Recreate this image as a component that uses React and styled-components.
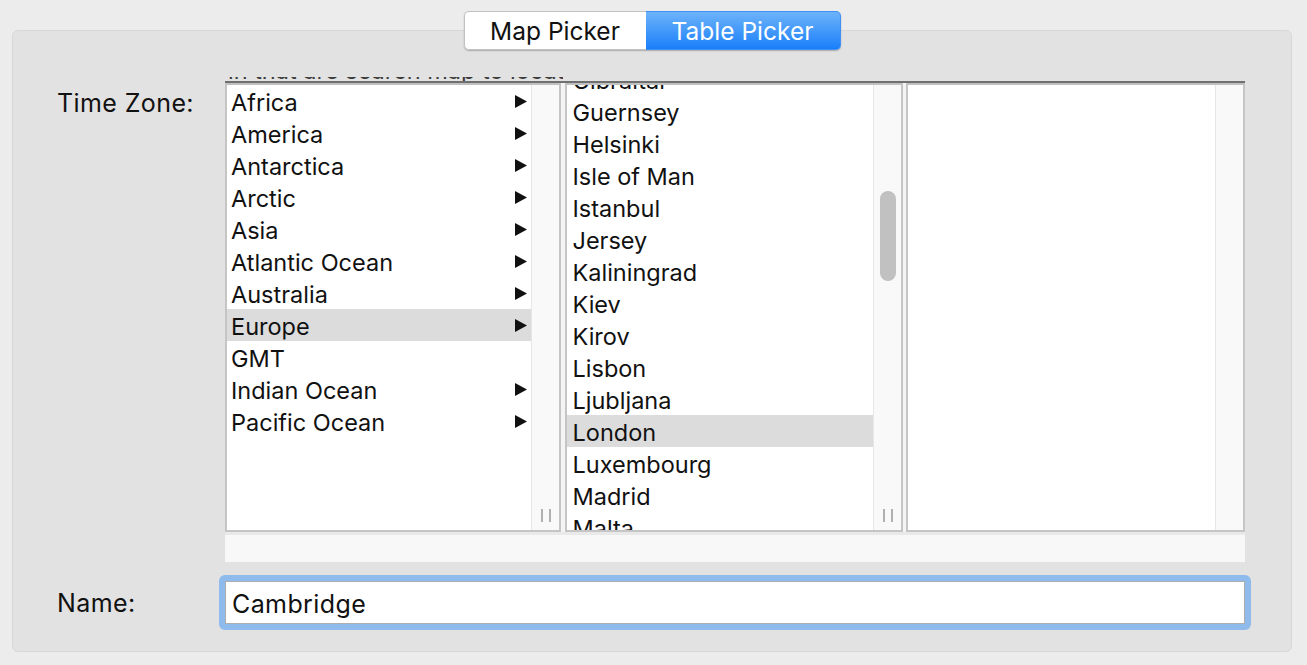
import React from "react";
import styled, { createGlobalStyle } from "styled-components";

const GlobalStyle = createGlobalStyle`
  body {
    margin: 0;
    background: #ececec;
    font-family: "Inter", "Liberation Sans", Arial, sans-serif;
    color: #111;
  }
`;

const regions = [
  { name: "Africa", more: true },
  { name: "America", more: true },
  { name: "Antarctica", more: true },
  { name: "Arctic", more: true },
  { name: "Asia", more: true },
  { name: "Atlantic Ocean", more: true },
  { name: "Australia", more: true },
  { name: "Europe", more: true, selected: true },
  { name: "GMT" },
  { name: "Indian Ocean", more: true },
  { name: "Pacific Ocean", more: true },
];

const cities = [
  "Gibraltar", "Guernsey", "Helsinki", "Isle of Man", "Istanbul", "Jersey",
  "Kaliningrad", "Kiev", "Kirov", "Lisbon", "Ljubljana", "London",
  "Luxembourg", "Madrid", "Malta",
];

const Page = styled.div`
  width: 1307px;
  height: 665px;
  box-sizing: border-box;
  padding: 11px 15px 0 12px;
  display: flex;
  flex-direction: column;
  align-items: center;
`;

const Segmented = styled.div`
  display: flex;
  position: relative;
  z-index: 1;
  border-radius: 5px;
  box-shadow: 0 1px 1.5px rgba(0, 0, 0, 0.25);
`;

const Segment = styled.div`
  width: ${(p) => p.$width}px;
  height: 39px;
  box-sizing: border-box;
  display: flex;
  align-items: center;
  justify-content: center;
  padding-top: 1px;
  font-size: 24.5px;
  color: ${(p) => (p.$active ? "#fff" : "#111")};
  background: ${(p) => (p.$active ? "linear-gradient(#6db3fa, #1a7ffa)" : "#fff")};
  border: 1px solid ${(p) => (p.$active ? "#3f8ff6" : "#c2c2c2")};
  border-radius: ${(p) => (p.$active ? "0 5px 5px 0" : "5px 0 0 5px")};
  ${(p) => (p.$active ? "border-left: none;" : "border-right: none;")}
`;

const Panel = styled.div`
  width: 1280px;
  height: 622px;
  margin-top: -20px;
  box-sizing: border-box;
  background: #e2e2e2;
  border: 1px solid #d7d7d7;
  border-radius: 6px;
  padding: 46px 0 0 44px;
  display: grid;
  grid-template-columns: 168px 1020px;
  grid-template-rows: auto auto;
  align-content: start;
  row-gap: 13px;
`;

const Label = styled.div`
  font-size: 25px;
  letter-spacing: 0.4px;
  line-height: 32px;
  padding-top: ${(p) => p.$top || 0}px;
  align-self: ${(p) => (p.$center ? "center" : "start")};
`;

const Browser = styled.div`
  display: flex;
  flex-direction: column;
`;

const Ghost = styled.div`
  height: 4px;
  width: 335px;
  overflow: hidden;
  display: flex;
  align-items: flex-end;
  padding-left: 3px;
  font-size: 23.5px;
  line-height: 20px;
  color: #3a3a3a;
  white-space: nowrap;
`;

const TopRule = styled.div`
  height: 2px;
  background: #707070;
`;

const Columns = styled.div`
  display: flex;
  justify-content: space-between;
  background: #f4f4f4;
  height: 449px;
`;

const Column = styled.div`
  width: ${(p) => p.$width}px;
  box-sizing: border-box;
  border: 2px solid #c5c5c5;
  border-top-color: #c0c0c0;
  background: #fff;
  display: flex;
`;

const List = styled.div`
  flex: 1;
  overflow: hidden;
`;

const ListInner = styled.div`
  margin-top: ${(p) => -(p.$scroll || 0)}px;
`;

const Row = styled.div`
  height: 32px;
  box-sizing: border-box;
  display: flex;
  align-items: center;
  justify-content: space-between;
  padding: 3px 4px 0 ${(p) => p.$pad}px;
  font-size: 23.5px;
  line-height: 29px;
  white-space: nowrap;
  background: ${(p) => (p.$selected ? "#dcdcdc" : "transparent")};

  svg {
    margin-top: -3px;
  }
`;

const Track = styled.div`
  width: 28px;
  flex-shrink: 0;
  box-sizing: border-box;
  border-left: 1px solid #e7e7e7;
  background: #f9f9f9;
  display: flex;
  flex-direction: column;
  justify-content: space-between;
  align-items: center;
`;

const Thumb = styled.div`
  width: 16px;
  height: 90px;
  margin-top: 106px;
  margin-left: 1px;
  border-radius: 8px;
  background: #c1c1c1;
`;

const Grip = styled.div`
  display: flex;
  gap: 6px;
  margin-top: auto;
  margin-bottom: 8px;
  margin-left: 1px;
`;

const GripLine = styled.div`
  width: 2px;
  height: 13px;
  background: #b0b0b0;
`;

const Spacer = styled.div`
  height: 3px;
  background: #e9e9e9;
`;

const HScroller = styled.div`
  height: 27px;
  background: #f8f8f8;
`;

const FocusRing = styled.div`
  margin-left: -6px;
  width: 1032px;
  box-sizing: border-box;
  padding: 6px;
  background: #8fbbec;
  border-radius: 6px;
`;

const Field = styled.div`
  height: 43px;
  box-sizing: border-box;
  background: #fff;
  border: 1px solid #aeaeae;
  padding: 3px 0 0 6px;
  display: flex;
  align-items: center;
  font-size: 25px;
  letter-spacing: 0.4px;
`;

const Arrow = () => (
  <svg width="12" height="13" viewBox="0 0 12 13">
    <polygon points="0,0 12,6.5 0,13" fill="#111" />
  </svg>
);

const Scroller = ({ thumb, grip }) => (
  <Track>
    {thumb ? <Thumb /> : <span />}
    {grip && (
      <Grip>
        <GripLine />
        <GripLine />
      </Grip>
    )}
  </Track>
);

export default function App() {
  return (
    <>
      <GlobalStyle />
      <Page>
        <Segmented>
          <Segment $width={182}>Map Picker</Segment>
          <Segment $width={195} $active>Table Picker</Segment>
        </Segmented>
        <Panel>
          <Label $top={10}>Time Zone:</Label>
          <Browser>
            <Ghost>in that are search map to locate a region</Ghost>
            <TopRule />
            <Columns>
              <Column $width={336}>
                <List>
                  <ListInner>
                    {regions.map((r) => (
                      <Row key={r.name} $pad={4} $selected={r.selected}>
                        <span>{r.name}</span>
                        {r.more && <Arrow />}
                      </Row>
                    ))}
                  </ListInner>
                </List>
                <Scroller grip />
              </Column>
              <Column $width={338}>
                <List>
                  <ListInner $scroll={22}>
                    {cities.map((c) => (
                      <Row key={c} $pad={6} $selected={c === "London"}>
                        <span>{c}</span>
                      </Row>
                    ))}
                  </ListInner>
                </List>
                <Scroller thumb grip />
              </Column>
              <Column $width={339}>
                <List />
                <Scroller />
              </Column>
            </Columns>
            <Spacer />
            <HScroller />
          </Browser>
          <Label $center>Name:</Label>
          <FocusRing>
            <Field>Cambridge</Field>
          </FocusRing>
        </Panel>
      </Page>
    </>
  );
}
